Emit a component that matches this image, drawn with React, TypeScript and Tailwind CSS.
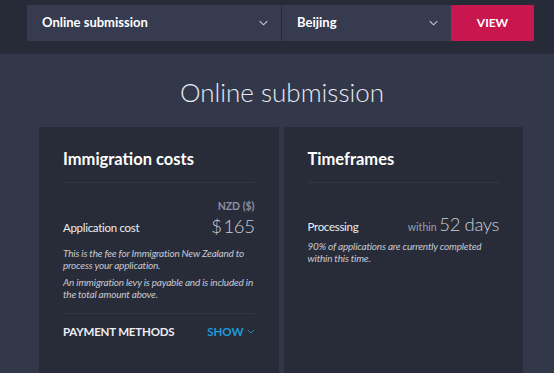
import { type ReactNode } from "react";

function Chevron({ className }: { className?: string }) {
  return (
    <svg viewBox="0 0 12 8" className={className} fill="none" stroke="currentColor" strokeWidth="1.4">
      <path d="M1 1.5 6 6.5 11 1.5" />
    </svg>
  );
}

function Select({ label, className }: { label: string; className: string }) {
  return (
    <div className={`flex h-9 items-center justify-between bg-[#363b4f] pr-[13px] pl-[15px] ${className}`}>
      <span className="text-[13px] font-bold text-white">{label}</span>
      <Chevron className="h-[6px] w-[9px] text-[#c9ccd6]" />
    </div>
  );
}

function Card({ title, children }: { title: string; children: ReactNode }) {
  return (
    <section className="flex-1 bg-[#282c39] px-6 pt-[22px]">
      <h2 className="m-0 text-[16.5px] leading-5 font-bold text-white">{title}</h2>
      <div className="mt-[13px] border-t border-[#323746]" />
      {children}
    </section>
  );
}

const note = "m-0 text-[10px] leading-3 tracking-[-0.2px] text-[#c6c9d3] italic";
const big = "text-[18.5px] leading-6 font-light tracking-[-0.4px]";

export default function App() {
  return (
    <div className="flex h-[373px] flex-col overflow-hidden bg-[#32374a] font-['Lato',sans-serif]">
      <header className="flex h-[54px] shrink-0 items-start bg-[#272b37] pt-[5px] pl-[27px]">
        <Select label="Online submission" className="w-[254px]" />
        <Select label="Beijing" className="ml-px w-[169px]" />
        <button
          type="button"
          className="flex h-9 w-[83px] items-center justify-center bg-[#c8164f] text-[12px] font-bold text-white"
        >
          VIEW
        </button>
      </header>

      <h1 className="m-0 mt-[20px] pl-[10px] text-center text-[26px] leading-9 font-light text-[#e8eaf0]">
        Online submission
      </h1>

      <main className="mt-[17px] ml-[39px] flex w-[484px] flex-1 gap-[5px]">
        <Card title="Immigration costs">
          <div className="mt-[17px] text-right text-[10.5px] leading-3 font-bold text-[#8b90a1]">NZD ($)</div>
          <div className="mt-[2px] flex items-end justify-between">
            <span className="mb-[2px] text-[11.5px] tracking-[-0.3px] text-[#eceef3]">Application cost</span>
            <span className={`${big} text-[#c9ccd6]`}>${"\u2009"}165</span>
          </div>
          <p className={`${note} mt-[9px]`}>
            This is the fee for Immigration New Zealand to process your application.
          </p>
          <p className={`${note} mt-[5px]`}>
            An immigration levy is payable and is included in the total amount above.
          </p>
          <div className="mt-[13px] border-t border-[#323746]" />
          <div className="mt-[9px] flex items-center justify-between">
            <span className="text-[11.5px] font-bold tracking-[-0.2px] text-[#eceef3]">PAYMENT METHODS</span>
            <span className="flex items-center gap-[3px] text-[11.5px] font-bold text-[#1c9cd8]">
              SHOW
              <Chevron className="h-[5px] w-[8px]" />
            </span>
          </div>
        </Card>
        <Card title="Timeframes">
          <div className="mt-[29px] flex items-end justify-between">
            <span className="mb-[2px] text-[11.5px] tracking-[-0.3px] text-[#eceef3]">Processing</span>
            <span className="text-[#c9ccd6]">
              <span className="text-[10.5px] text-[#9a9eae]">within </span>
              <span className={big}>52 days</span>
            </span>
          </div>
          <p className={`${note} mt-[3px]`}>
            90% of applications are currently completed within this time.
          </p>
        </Card>
      </main>
    </div>
  );
}
